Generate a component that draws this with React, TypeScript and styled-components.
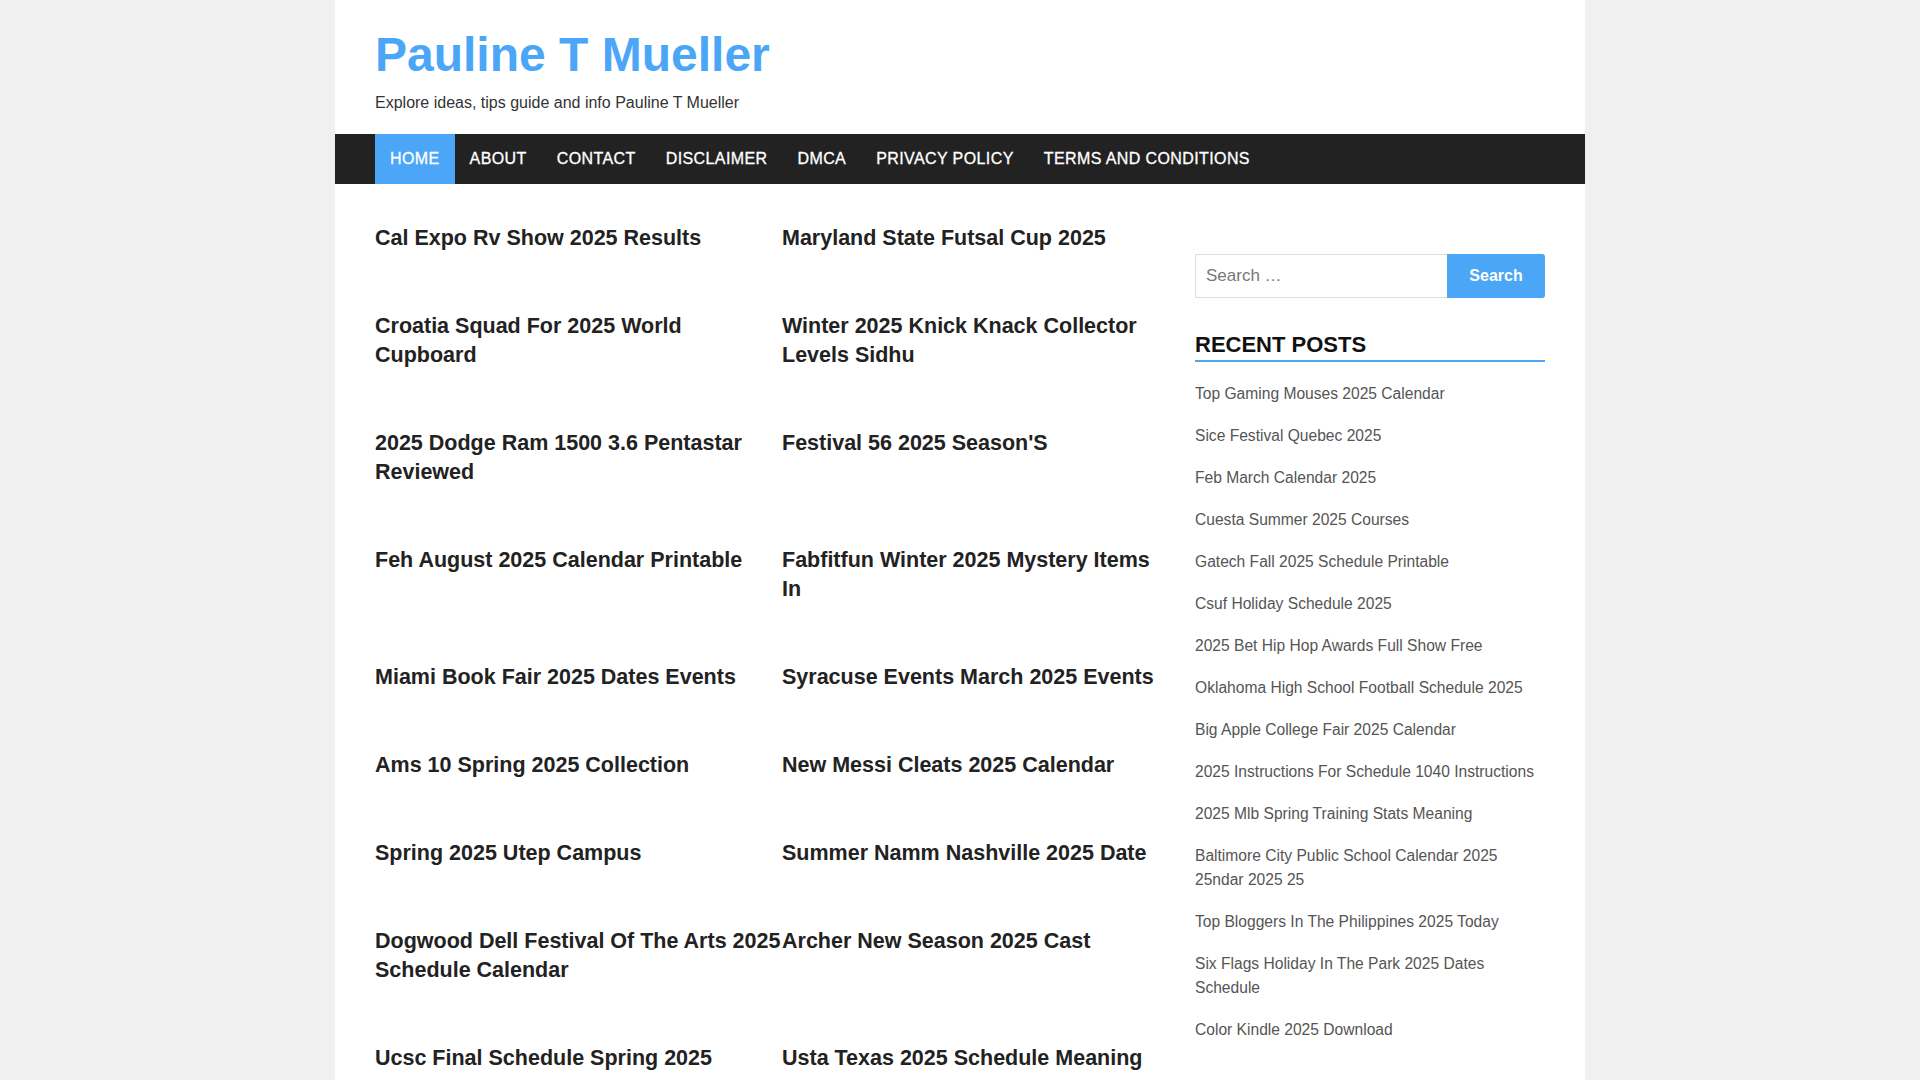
import styled, { createGlobalStyle } from 'styled-components'

const Global = createGlobalStyle`
  html { overflow-y: scroll; }
  html, body { margin: 0; padding: 0; }
  body {
    background: #f0f0f0;
    font-family: "Liberation Sans", Arial, sans-serif;
    color: #222;
  }
`

const Page = styled.div`
  width: 1250px;
  margin: 0 auto;
  background: #fff;
  min-height: 1080px;
`

const Header = styled.header`
  padding: 24px 40px 22px;
`

const SiteTitle = styled.h1`
  margin: 0;
  font-size: 48px;
  font-weight: 700;
  line-height: 62px;
  color: #4ba6f7;
`

const Tagline = styled.p`
  margin: 8px 0 0;
  font-size: 16px;
  color: #333;
`

const Nav = styled.nav`
  background: #222;
  height: 50px;
  display: flex;
  padding: 0 40px;
`

const NavItem = styled.a<{ $active?: boolean }>`
  display: flex;
  align-items: center;
  padding: 0 15px;
  font-size: 16px;
  letter-spacing: 0.4px;
  -webkit-text-stroke: 0.3px #fff;
  color: #fff;
  text-transform: uppercase;
  background: ${p => (p.$active ? '#4ba6f7' : 'transparent')};
`

const Body = styled.div`
  display: flex;
  padding: 40px 40px 0;
  gap: 40px;
`

const Posts = styled.div`
  flex: 0 0 780px;
  display: grid;
  grid-template-columns: 407px 373px;
  align-items: start;
`

const PostTitle = styled.h2`
  margin: 0 0 59px;
  font-size: 21.5px;
  font-weight: 700;
  line-height: 29px;
  color: #222;
`

const Sidebar = styled.aside`
  width: 350px;
  padding-top: 30px;
`

const SearchRow = styled.div`
  display: flex;
  height: 44px;
`

const SearchInput = styled.div`
  flex: 1;
  border: 1px solid #ddd;
  border-right: none;
  display: flex;
  align-items: center;
  padding: 0 10px;
  font-size: 17px;
  color: #777;
`

const SearchButton = styled.div`
  width: 98px;
  background: #4ba6f7;
  color: #fff;
  font-size: 16px;
  font-weight: 700;
  display: flex;
  align-items: center;
  justify-content: center;
  border-radius: 0 3px 3px 0;
`

const WidgetTitle = styled.h3`
  margin: 34px 0 0;
  font-size: 22px;
  font-weight: 700;
  text-transform: uppercase;
  color: #111;
  padding-bottom: 2px;
  border-bottom: 2px solid #4ba6f7;
`

const RecentList = styled.ul`
  list-style: none;
  margin: 20px 0 0;
  padding: 0;
`

const RecentItem = styled.li`
  font-size: 15.6px;
  line-height: 24px;
  color: #555;
  margin-bottom: 18px;
`

const nav = ['Home', 'About', 'Contact', 'Disclaimer', 'DMCA', 'Privacy Policy', 'Terms and Conditions']

const posts = [
  'Cal Expo Rv Show 2025 Results',
  'Maryland State Futsal Cup 2025',
  'Croatia Squad For 2025 World Cupboard',
  'Winter 2025 Knick Knack Collector Levels Sidhu',
  '2025 Dodge Ram 1500 3.6 Pentastar Reviewed',
  "Festival 56 2025 Season'S",
  'Feh August 2025 Calendar Printable',
  'Fabfitfun Winter 2025 Mystery Items In',
  'Miami Book Fair 2025 Dates Events',
  'Syracuse Events March 2025 Events',
  'Ams 10 Spring 2025 Collection',
  'New Messi Cleats 2025 Calendar',
  'Spring 2025 Utep Campus',
  'Summer Namm Nashville 2025 Date',
  'Dogwood Dell Festival Of The Arts 2025 Schedule Calendar',
  'Archer New Season 2025 Cast',
  'Ucsc Final Schedule Spring 2025',
  'Usta Texas 2025 Schedule Meaning',
]

const recent = [
  'Top Gaming Mouses 2025 Calendar',
  'Sice Festival Quebec 2025',
  'Feb March Calendar 2025',
  'Cuesta Summer 2025 Courses',
  'Gatech Fall 2025 Schedule Printable',
  'Csuf Holiday Schedule 2025',
  '2025 Bet Hip Hop Awards Full Show Free',
  'Oklahoma High School Football Schedule 2025',
  'Big Apple College Fair 2025 Calendar',
  '2025 Instructions For Schedule 1040 Instructions',
  '2025 Mlb Spring Training Stats Meaning',
  'Baltimore City Public School Calendar 2025 25ndar 2025 25',
  'Top Bloggers In The Philippines 2025 Today',
  'Six Flags Holiday In The Park 2025 Dates Schedule',
  'Color Kindle 2025 Download',
]

export default function App() {
  return (
    <>
      <Global />
      <Page>
        <Header>
          <SiteTitle>Pauline T Mueller</SiteTitle>
          <Tagline>Explore ideas, tips guide and info Pauline T Mueller</Tagline>
        </Header>
        <Nav>
          {nav.map((n, i) => (
            <NavItem key={n} $active={i === 0}>{n}</NavItem>
          ))}
        </Nav>
        <Body>
          <Posts>
            {posts.map(p => (
              <PostTitle key={p}>{p}</PostTitle>
            ))}
          </Posts>
          <Sidebar>
            <SearchRow>
              <SearchInput>Search …</SearchInput>
              <SearchButton>Search</SearchButton>
            </SearchRow>
            <WidgetTitle>Recent Posts</WidgetTitle>
            <RecentList>
              {recent.map(r => (
                <RecentItem key={r}>{r}</RecentItem>
              ))}
            </RecentList>
          </Sidebar>
        </Body>
      </Page>
    </>
  )
}
